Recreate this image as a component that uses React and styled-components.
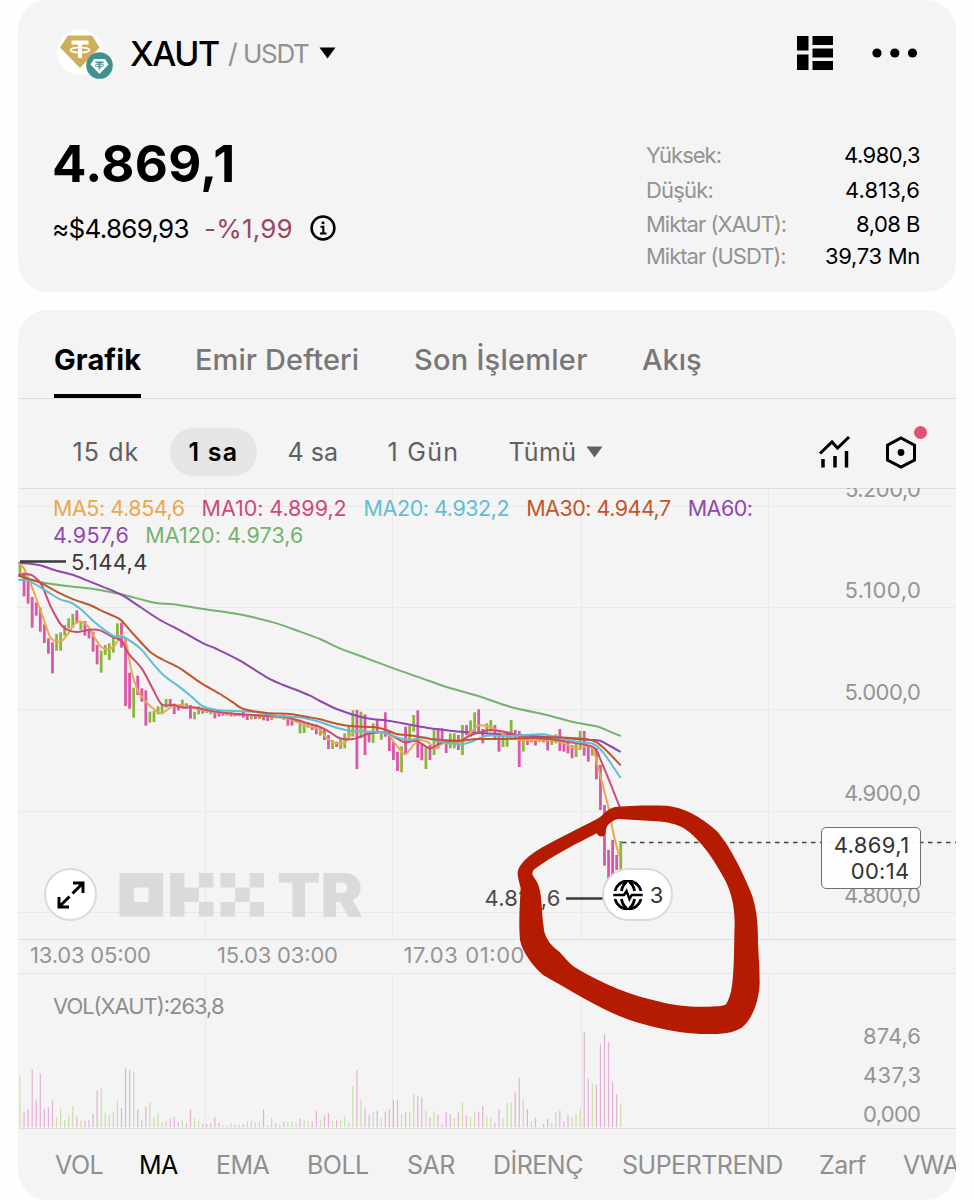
import React from "react";
import styled, { createGlobalStyle } from "styled-components";

const GlobalStyle = createGlobalStyle`
  *, *::before, *::after { box-sizing: border-box; }
  body {
    margin: 0;
    background: #fefefe;
    color: #000;
    font-family: Inter, "Liberation Sans", sans-serif;
    -webkit-font-smoothing: antialiased;
  }
`;

const Page = styled.main`
  width: 974px;
  height: 1200px;
  padding: 0 18px;
  display: flex;
  flex-direction: column;
  gap: 18px;
  overflow: hidden;
`;

const Card = styled.section`
  flex: none;
  height: ${(p) => p.$height}px;
  background: #f4f4f4;
  border-radius: 30px;
  overflow: hidden;
`;

const Label = styled.span`
  display: block;
  flex: none;
  width: ${(p) => (p.$width ? `${p.$width}px` : "auto")};
  font-size: ${(p) => p.$size}px;
  font-weight: ${(p) => p.$weight || 400};
  letter-spacing: ${(p) => p.$track || 0}px;
  color: ${(p) => p.$color || "#000"};
  white-space: nowrap;
`;

/* Header card */
const PairBar = styled.header`
  height: 106px;
  padding: 0 38.5px 0 39px;
  display: flex;
  align-items: center;
`;
const Pair = styled.div`
  flex: 1;
  display: flex;
  align-items: center;
  svg { flex: none; }
`;
const PairIcon = styled.svg`
  margin-right: 16px;
`;
const BarIcons = styled.div`
  display: flex;
  align-items: center;
  gap: 39px;
`;
const Quote = styled.div`
  display: flex;
  justify-content: space-between;
  padding: 0 36px 0 34px;
`;
const PriceColumn = styled.div`
  padding-top: 28px;
`;
const Price = styled.div`
  height: 60px;
  font-size: 51px;
  font-weight: 700;
  line-height: 60px;
  letter-spacing: ${(p) => p.$track}px;
`;
const SubPrice = styled.div`
  display: flex;
  align-items: center;
  height: 36px;
  margin-top: 16px;
`;
const Stats = styled.dl`
  width: 274px;
  margin: 32px 0 0;
  display: grid;
  grid-template-columns: 1fr auto;
  grid-template-rows: 34px 35px 33px 32px;
  align-items: center;
  font-size: 22px;
  dt { color: #929292; }
  dd { margin: 0; text-align: right; }
`;
const StatName = styled.dt`
  letter-spacing: ${(p) => p.$track}px;
`;
const StatValue = styled.dd`
  letter-spacing: ${(p) => p.$track}px;
`;

/* Chart card */
const Tabs = styled.nav`
  height: 89px;
  padding: 0 36px;
  display: flex;
  gap: 54px;
  border-bottom: 1px solid #dedede;
`;
const Tab = styled.span`
  flex: none;
  width: ${(p) => p.$width}px;
  height: 88px;
  padding-top: 32px;
  font-size: 29px;
  line-height: 36px;
  font-weight: ${(p) => (p.$active ? 700 : 500)};
  letter-spacing: ${(p) => p.$track}px;
  white-space: nowrap;
  color: ${(p) => (p.$active ? "#000" : "#777")};
  box-shadow: ${(p) => (p.$active ? "inset 0 -4px #000" : "none")};
`;
const Toolbar = styled.div`
  height: 89px;
  padding: 16px 39px 0 36px;
  display: flex;
  align-items: center;
`;
const Frames = styled.div`
  flex: 1;
  display: flex;
  align-items: center;
  gap: 12px;
`;
const Frame = styled.span`
  display: flex;
  align-items: center;
  gap: 10px;
  height: 48px;
  width: ${(p) => p.$width}px;
  padding-left: 18.5px;
  border-radius: 24px;
  background: ${(p) => (p.$active ? "#e5e5e5" : "transparent")};
`;
const Tools = styled.div`
  display: flex;
  align-items: center;
  gap: 33px;
`;
const Tool = styled.span`
  position: relative;
  display: flex;
`;
const Dot = styled.i`
  position: absolute;
  top: -9px;
  right: -10px;
  width: 13px;
  height: 13px;
  border-radius: 50%;
  background: #db5470;
`;
const ChartArea = styled.div`
  position: relative;
  height: 641px;
  > svg { display: block; }
`;
const Legend = styled.div`
  position: absolute;
  top: 7px;
  left: 35px;
  display: flex;
  flex-direction: column;
`;
const LegendRow = styled.div`
  display: flex;
  gap: ${(p) => p.$gap}px;
  height: 27px;
  font-size: 21.5px;
  line-height: 27px;
`;
const LegendItem = styled.span`
  color: ${(p) => p.$color};
  letter-spacing: ${(p) => p.$track}px;
  white-space: nowrap;
`;
const RoundButton = styled.button`
  position: absolute;
  left: ${(p) => p.$left}px;
  top: 380px;
  width: ${(p) => p.$width}px;
  height: 53px;
  padding: 0;
  display: flex;
  align-items: center;
  justify-content: center;
  gap: 7px;
  border: 2px solid #dadada;
  border-radius: 27px;
  background: #fff;
  font-family: inherit;
`;
const PriceTag = styled.div`
  position: absolute;
  left: 803px;
  top: 339px;
  width: 100px;
  height: 62px;
  padding: 5px 10.5px 0 0;
  display: flex;
  flex-direction: column;
  align-items: flex-end;
  border: 1.5px solid #707070;
  border-radius: 5px;
  background: rgba(254, 254, 254, 0.93);
  line-height: 25.5px;
`;
const Indicators = styled.nav`
  height: 71px;
  padding-left: 37px;
  display: flex;
  align-items: center;
  gap: 38px;
`;

const GREEN = "#8bb63c";
const PINK = "#d957a8";
const MA = {
  ma5: "#eaa850",
  ma10: "#cd4a75",
  ma20: "#62bdd3",
  ma30: "#c2562a",
  ma60: "#8e48ad",
  ma120: "#74b36d",
};

/* high / low of each hourly bar in thirds of a pixel below the chart's origin, g = up, p = down */
const BARS = `236 275 g,262 334 p,280 356 p,336 428 p,352 392 p,368 440 p,418 474 p,460 506 p,472 565 p,447 497 g,
442 497 g,420 452 g,400 430 g,387 428 g,376 415 p,408 434 g,408 452 p,432 460 p,440 500 p,480 538 p,
497 563 g,480 510 g,475 525 g,450 503 g,415 455 g,413 488 p,460 663 p,563 671 p,608 698 g,572 630 p,
610 650 p,616 722 p,680 713 g,678 711 g,664 688 g,660 685 g,642 668 g,642 664 p,656 687 p,660 676 p,
644 668 g,655 670 p,660 701 p,680 703 g,664 688 g,672 686 p,674 684 g,674 688 g,678 700 p,680 695 p,
680 692 p,682 692 g,682 694 p,684 694 p,684 694 g,680 698 p,688 705 p,688 703 g,690 702 p,688 702 g,
690 706 p,690 708 p,688 705 g,692 700 p,692 700 g,690 704 p,696 722 p,706 722 p,705 712 g,704 745 g,
715 744 g,712 728 g,716 735 p,718 748 p,725 752 g,735 765 p,750 792 p,765 792 g,770 786 p,762 792 g,
745 790 g,720 760 g,676 755 g,675 852 p,680 760 g,688 810 p,740 772 p,715 774 g,704 745 p,738 764 g,
682 755 p,740 798 p,770 825 p,800 858 p,784 862 g,725 805 p,722 770 g,690 740 g,676 818 p,775 826 p,
788 852 g,780 825 p,735 810 g,730 790 p,730 765 p,765 804 p,745 790 g,745 790 g,750 795 p,720 810 g,
720 750 p,706 755 g,682 740 g,673 745 p,732 775 p,715 745 g,705 740 g,720 765 p,745 800 p,752 786 g,
745 785 g,705 765 g,735 765 p,738 846 p,760 800 g,758 780 p,758 772 g,760 782 p,758 770 p,757 772 p,
760 796 p,760 780 g,748 775 g,732 798 p,768 800 p,770 805 p,780 820 p,775 816 g,738 795 g,738 812 p,
780 830 p,782 812 g,790 883 p,840 975 p,960 1142 p,1095 1190 p,1065 1175 p,1110 1155 p,1068 1180 g`
  .split(",")
  .map((s) => s.trim().split(" "));

/* top of each volume column, baseline 352 */
const VOLUME = `198g 304p 298p 178p 272p 190p 296p 292p 272p 322g 294g 330g 316g 288g 320p 332g 332p 330p 312p 242p
234g 308g 314g 304g 270g 294p 175p 180p 186g 298p 330p 290p 278g 322g 310g 338g 333g 325p 321p 337p
331g 340p 299p 326g 332g 341p 342p 340p 321p 339p 345g 345g 340g 345p 346p 342p 333g 333g 338g 335g
298p 346g 324g 339p 345p 335p 335g 334g 337g 325p 328g 334g 334p 302p 331g 316p 309p 332g 331p 328g
320g 338g 228g 180p 269g 293p 316p 306g 302p 325g 304p 298p 269p 269p 312g 306p 305g 252g 258p 262p
302g 323p 304g 315p 342p 306p 313p 324g 308p 277g 318p 322g 304g 306p 288p 319g 325g 338p 298p 325g
279g 277g 245p 204p 268g 297p 334g 324p 352g 342p 327p 338g 306g 302p 334p 316p 320g 312g 296g 66p
206p 220g 224p 103p 73p 97p 216p 253p 280g`.split(/\s+/);

const barX = (i) => 20 + i * 4.059;

/* moving averages: first list is the left half, second the right half (x from 320) */
const LINES = [
  { color: MA.ma120, left: "65,268 85,281 115,290 200,303 280,312 360,327 430,345 475,355 520,358 610,372 700,385 760,397 830,415 900,440", right: "0,462 60,490 140,520 220,550 300,578 380,606 475,633 570,665 680,690 760,711 830,724 870,740 902,753" },
  { color: MA.ma60, left: "55,234 90,236 120,241 170,257 220,270 270,290 360,327 400,352 475,402 540,436 610,475 650,492 720,527 800,577 850,600 890,615 930,632", right: "0,648 50,672 110,692 150,701 210,708 270,719 330,730 390,737 440,742 520,746 590,750 700,757 800,764 840,767 870,783 902,801" },
  { color: MA.ma5, left: "55,234 72,250 85,280 105,330 130,400 150,455 170,470 185,468 205,445 225,415 245,410 265,425 285,460 305,487 325,493 345,480 365,450 380,480 395,560 415,620 435,648 465,675 485,685 515,665 545,660 580,668 620,678 700,688 800,693 860,700 920,722", right: "0,733 20,760 50,775 75,772 95,745 120,735 150,745 200,745 225,775 255,808 280,780 300,765 325,772 345,790 370,775 410,775 440,755 475,722 515,728 550,748 600,765 660,765 720,770 770,792 800,782 820,792 835,850 865,966 880,1045 897,1112" },
  { color: MA.ma10, left: "55,270 80,268 100,273 125,300 150,360 180,415 200,433 230,441 270,434 300,436 330,452 365,468 385,505 425,550 455,605 485,658 520,660 550,668 580,667 650,680 720,688 800,692 860,697 920,714", right: "0,726 30,742 60,760 100,762 140,748 170,742 200,743 230,760 255,772 290,768 330,790 370,770 420,768 450,752 480,742 510,735 560,742 620,757 690,762 740,770 790,778 825,790 845,832 873,900 900,968" },
  { color: MA.ma20, left: "55,285 80,285 110,300 150,325 180,343 215,354 245,375 280,408 320,440 345,455 370,456 420,490 450,525 490,570 540,607 575,635 607,663 650,675 700,678 760,680 830,692 900,697", right: "0,711 40,725 90,737 140,740 190,742 230,757 270,765 310,757 350,767 390,775 430,777 460,768 500,752 560,753 620,750 670,748 730,762 780,772 820,777 850,803 902,879" },
  { color: MA.ma30, left: "55,272 90,283 120,292 170,320 220,343 270,360 310,380 345,395 365,407 400,447 450,500 490,525 540,550 600,592 660,627 700,653 730,672 800,684 870,687 930,697", right: "0,703 50,716 100,724 160,726 200,735 230,747 280,752 340,763 420,767 470,762 540,762 600,760 700,757 800,763 830,772 860,797 902,841" },
];

const pts = (s, x0) =>
  s.split(" ").map((p) => {
    const [x, y] = p.split(",").map(Number);
    return [x0 + x / 3, 485 + y / 3];
  });

const smooth = (p) => {
  let d = `M${p[0][0]} ${p[0][1]}`;
  for (let i = 0; i < p.length - 1; i++) {
    const a = p[i - 1] || p[i];
    const b = p[i];
    const c = p[i + 1];
    const e = p[i + 2] || c;
    d += `C${b[0] + (c[0] - a[0]) / 7} ${b[1] + (c[1] - a[1]) / 7} ${c[0] - (e[0] - b[0]) / 7} ${c[1] - (e[1] - b[1]) / 7} ${c[0]} ${c[1]}`;
  }
  return d;
};

const AxisText = ({ x, y, w, end, color = "#949494", children }) => (
  <text x={x} y={y} fontSize="22" fill={color} textLength={w} textAnchor={end ? "end" : "start"}>
    {children}
  </text>
);

const Chart = () => (
  <svg width="938" height="641" viewBox="18 488 938 641" fontFamily="Inter, sans-serif">
    <g stroke="#e9e9e9" strokeWidth="1">
      {[506.5, 607.5, 709.5, 811.5, 912.5].map((y) => <path key={y} d={`M18 ${y}H956`} />)}
      {[205.5, 392.5, 581.5, 768.5].map((x) => <path key={x} d={`M${x} 488V937M${x} 974V1128`} />)}
    </g>
    <path d="M18 488.500H956M18 939.500H956M18 1128.500H956" stroke="#dedede" />
    <path d="M18 973.500H956" stroke="#e4e4e4" />

    <g fill="#dadada">
      <path fillRule="evenodd" d="M119.500 873H163.200V916.500H119.500ZM134 887.500V902H148.500V887.500Z" />
      <path d="M170 873H184.500V887.500H199V902H184.500V916.500H170ZM199 873H213.500V887.500H199ZM199 902H213.500V916.500H199Z" />
      <path d="M220.500 873H235.200V887.500H220.500ZM249.700 873H264V887.500H249.700ZM235.200 887.500H249.700V902H235.200ZM220.500 902H235.200V916.500H220.500ZM249.700 902H264V916.500H249.700Z" />
      <text x="277" y="916.500" fontSize="60" fontWeight="900" textLength="86" lengthAdjust="spacingAndGlyphs">TR</text>
    </g>

    {VOLUME.map((v, i) => {
      const h = (352 - parseInt(v, 10)) / 3;
      return <rect key={i} x={barX(i) - 0.6} y={1127.3 - h} width="1.2" height={h} fill={v.endsWith("g") ? "#c9dfa4" : "#e3b0d6"} />;
    })}
    {BARS.map(([hi, lo, dir], i) => (
      <rect key={i} x={barX(i) - 1.4} y={485 + hi / 3} width="2.8" height={(lo - hi) / 3} fill={dir === "g" ? GREEN : PINK} />
    ))}
    {LINES.map((l) => (
      <path key={l.color} d={smooth([...pts(l.left, 0), ...pts(l.right, 320)])} fill="none" stroke={l.color} strokeWidth="2" strokeLinejoin="round" />
    ))}

    <path d="M20 561.500H66M566 898.500H604" stroke="#3a3a3a" strokeWidth="2.4" />
    <AxisText x={71} y={570} w={76.5} color="#3a3a3a">5.144,4</AxisText>
    <AxisText x={484.5} y={906} w={76} color="#4a4a4a">4.813,6</AxisText>
    <path d="M622 842.500H956" stroke="#444" strokeWidth="1.3" strokeDasharray="4.5 4.5" />

    <AxisText x={921} y={496.5} w={76} end>5.200,0</AxisText>
    <AxisText x={921} y={598} w={76.5} end>5.100,0</AxisText>
    <AxisText x={921} y={699.5} w={76.5} end>5.000,0</AxisText>
    <AxisText x={921} y={801} w={77} end>4.900,0</AxisText>
    <AxisText x={921} y={902.5} w={77} end>4.800,0</AxisText>
    <AxisText x={30} y={963} w={121}>13.03 05:00</AxisText>
    <AxisText x={217} y={963} w={121}>15.03 03:00</AxisText>
    <AxisText x={403.5} y={963} w={121}>17.03 01:00</AxisText>
    <AxisText x={53} y={1014} w={171.5} color="#8e8e8e">VOL(XAUT):263,8</AxisText>
    <AxisText x={921} y={1044} w={58} end>874,6</AxisText>
    <AxisText x={921} y={1083} w={58} end>437,3</AxisText>
    <AxisText x={921} y={1121.5} w={58} end>0,000</AxisText>

    <path
      transform="translate(470 690) scale(.33333)"
      fill="#b51b00"
      fillRule="evenodd"
      d="M143 552C142 535 155 518 175 500C225 462 310 425 385 385C400 375 410 358 432 352C470 346 540 346 590 347C640 352 690 378 738 421C775 460 815 540 842 605C858 645 864 690 864 760C866 800 869 840 869 880C867 930 850 985 815 1013C785 1032 740 1033 690 1032C620 1029 560 1014 490 994C400 964 310 906 218 854C190 828 158 790 150 750C145 700 150 640 152 595C149 580 144 568 143 552ZM188 556C186 548 188 542 194 537C250 496 318 462 380 430C384 441 400 442 405 434C408 423 408 409 416 403C424 396 432 388 444 387L560 394C590 396 620 402 642 415C695 450 735 515 765 570C785 610 794 650 794 700C792 760 793 820 788 870C785 900 780 925 769 941C763 949 740 949 700 950C660 951 610 946 570 935C490 918 400 884 312 830C290 814 280 795 262 781C240 763 222 740 221 710C214 670 217 620 206 588C202 575 194 566 188 556Z"
    />
  </svg>
);

const CoinPair = () => (
  <PairIcon width="57" height="52" viewBox="57 28 57 52">
    <circle cx="80" cy="53" r="23" fill="#fff" />
    <path d="M68 36.500H92L99.500 48.500L80 69L60 48.500Z" fill="#cfae5e" />
    <path d="M71.500 43.500H88.500M80 43.500V59" stroke="#fff" strokeWidth="4" />
    <ellipse cx="80" cy="51" rx="9.500" ry="2.600" fill="none" stroke="#fff" strokeWidth="1.500" />
    <circle cx="99.500" cy="66.500" r="13.300" fill="#40918f" />
    <path d="M94 60H105L108.500 65.500L99.500 75L90.500 65.500Z" fill="#fff" />
    <path d="M95.500 63.300H103.500M99.500 63.300V70.500" stroke="#40918f" strokeWidth="1.700" />
    <ellipse cx="99.500" cy="66.500" rx="4.500" ry="1.300" fill="none" stroke="#40918f" strokeWidth="0.900" />
  </PairIcon>
);

const Caret = ({ color = "#000" }) => (
  <svg width="17" height="12" viewBox="0 0 17 12"><path d="M0.500 0.500H16.500L8.500 11.500Z" fill={color} /></svg>
);

const tabs = [
  ["Grafik", 87, 0.1],
  ["Emir Defteri", 165, 0.1],
  ["Son İşlemler", 174, 0.25],
  ["Akış", 60, 0],
];
const frames = [
  ["15 dk", 104, 1.1],
  ["1 sa", 87, 1.2],
  ["4 sa", 88, 0],
  ["1 Gün", 109, 1.3],
  ["Tümü", 115, 0.4],
];
const indicators = [
  ["VOL", 46], ["MA", 39], ["EMA", 53], ["BOLL", 62], ["SAR", 48],
  ["DİRENÇ", 91], ["SUPERTREND", 159], ["Zarf", 46], ["VWAP", 70],
];
const legendRows = [
  [
    ["MA5: 4.854,6", MA.ma5, -0.45],
    ["MA10: 4.899,2", MA.ma10, -0.05],
    ["MA20: 4.932,2", MA.ma20, -0.45],
    ["MA30: 4.944,7", MA.ma30, -0.5],
    ["MA60:", MA.ma60, -0.5],
  ],
  [
    ["4.957,6", MA.ma60, 0.3],
    ["MA120: 4.973,6", MA.ma120, 0.1],
  ],
];

export default function App() {
  return (
    <>
      <GlobalStyle />
      <Page>
        <Card $height={292}>
          <PairBar>
            <Pair>
              <CoinPair />
              <Label $size={34} $weight={500} $track={-1.5} $width={98}>XAUT</Label>
              <Label $size={27} $color="#909090" $width={15}>/</Label>
              <Label $size={26} $color="#909090" $track={-1.3} $width={76}>USDT</Label>
              <Caret />
            </Pair>
            <BarIcons>
              <svg width="36" height="34" viewBox="0 0 36 34">
                <path d="M0 0H11.500V14.500H0ZM0 18.500H11.500V34H0ZM15.500 0H36V9H15.500ZM15.500 12.500H36V21.500H15.500ZM15.500 25H36V34H15.500Z" />
              </svg>
              <svg width="46" height="10" viewBox="0 0 46 10">
                <circle cx="5" cy="5" r="4.600" /><circle cx="22.800" cy="5" r="4.600" /><circle cx="40.500" cy="5" r="4.600" />
              </svg>
            </BarIcons>
          </PairBar>
          <Quote>
            <PriceColumn>
              <Price $track={0.4}>4.869,1</Price>
              <SubPrice>
                <Label $size={26} $track={-0.7} $width={152}>≈$4.869,93</Label>
                <Label $size={26} $color="#9c4563" $track={0.2} $width={106}>-%1,99</Label>
                <svg width="26" height="26" viewBox="0 0 26 26">
                  <circle cx="13" cy="13" r="11.400" fill="none" stroke="#000" strokeWidth="2.500" />
                  <path d="M10.500 11.800H13.300V18.500M10 18.500H16.500" fill="none" stroke="#000" strokeWidth="2.100" />
                  <circle cx="13" cy="7.800" r="1.500" />
                </svg>
              </SubPrice>
            </PriceColumn>
            <Stats>
              <StatName $track={-1}>Yüksek:</StatName><StatValue $track={-0.5}>4.980,3</StatValue>
              <StatName $track={-0.8}>Düşük:</StatName><StatValue $track={0.1}>4.813,6</StatValue>
              <StatName $track={-1}>Miktar (XAUT):</StatName><StatValue $track={-0.5}>8,08 B</StatValue>
              <StatName $track={-1}>Miktar (USDT):</StatName><StatValue $track={-0.3}>39,73 Mn</StatValue>
            </Stats>
          </Quote>
        </Card>

        <Card $height={890}>
          <Tabs>
            {tabs.map(([name, w, t], i) => (
              <Tab key={name} $active={i === 0} $width={w} $track={t}>{name}</Tab>
            ))}
          </Tabs>
          <Toolbar>
            <Frames>
              {frames.map(([name, w, t], i) => (
                <Frame key={name} $width={w} $active={i === 1}>
                  <Label $size={25} $weight={i === 1 ? 600 : 400} $track={t} $color={i === 1 ? "#000" : "#606060"}>{name}</Label>
                  {i === 4 && <Caret color="#606060" />}
                </Frame>
              ))}
            </Frames>
            <Tools>
              <Tool>
                <svg width="34" height="34" viewBox="818 434 34 34">
                  <path d="M820 452.500L832 441L837.500 447L849 436" fill="none" stroke="#000" strokeWidth="3" />
                  <path d="M823 458V466.500M835 455V466.500M846.500 450V466.500" stroke="#000" strokeWidth="3.500" />
                </svg>
              </Tool>
              <Tool>
                <svg width="32" height="34" viewBox="885 434 32 34">
                  <path d="M901 437L914.500 444.200V459L901 466L887.500 459V444.200Z" fill="none" stroke="#000" strokeWidth="3" />
                  <circle cx="901" cy="451.500" r="3.400" />
                </svg>
                <Dot />
              </Tool>
            </Tools>
          </Toolbar>
          <ChartArea>
            <Chart />
            <Legend>
              {legendRows.map((row, i) => (
                <LegendRow key={i} $gap={i === 0 ? 17 : 16}>
                  {row.map(([text, color, track]) => (
                    <LegendItem key={text} $color={color} $track={track}>{text}</LegendItem>
                  ))}
                </LegendRow>
              ))}
            </Legend>
            <RoundButton $left={26} $width={53}>
              <svg width="28" height="28" viewBox="0 0 28 28">
                <path d="M15.500 12.500L25.500 2.500M16 2H26V12M12.500 15.500L2.500 25.500M2 16V26H12" fill="none" stroke="#000" strokeWidth="3" />
              </svg>
            </RoundButton>
            <RoundButton $left={584} $width={71}>
              <svg width="31" height="30" viewBox="-1 0 31 30" fill="none" stroke="#000" strokeWidth="2.8">
                <path d="M2 11A13.400 13.400 0 0 1 28 11M2 19A13.400 13.400 0 0 0 28 19" />
                <path d="M8.500 11C9 7.500 10.800 4 13.500 1.800M21.500 11C21 7.500 19.200 4 16.500 1.800M8.500 19C9 22.500 10.800 26 13.500 28.200M21.500 19C21 22.500 19.200 26 16.500 28.200" />
                <path d="M0.300 15H11L13.500 11L16.500 19L18.800 15H29.700" strokeWidth="2.5" />
              </svg>
              <Label $size={22} $color="#333">3</Label>
            </RoundButton>
            <PriceTag>
              <Label $size={22} $color="#333" $track={0.4}>4.869,1</Label>
              <Label $size={22} $color="#333" $track={0.3}>00:14</Label>
            </PriceTag>
          </ChartArea>
          <Indicators>
            {indicators.map(([name, w]) => (
              <Label key={name} $size={25} $width={w} $track={-0.5} $color={name === "MA" ? "#000" : "#8f8f8f"}>{name}</Label>
            ))}
          </Indicators>
        </Card>
      </Page>
    </>
  );
}
